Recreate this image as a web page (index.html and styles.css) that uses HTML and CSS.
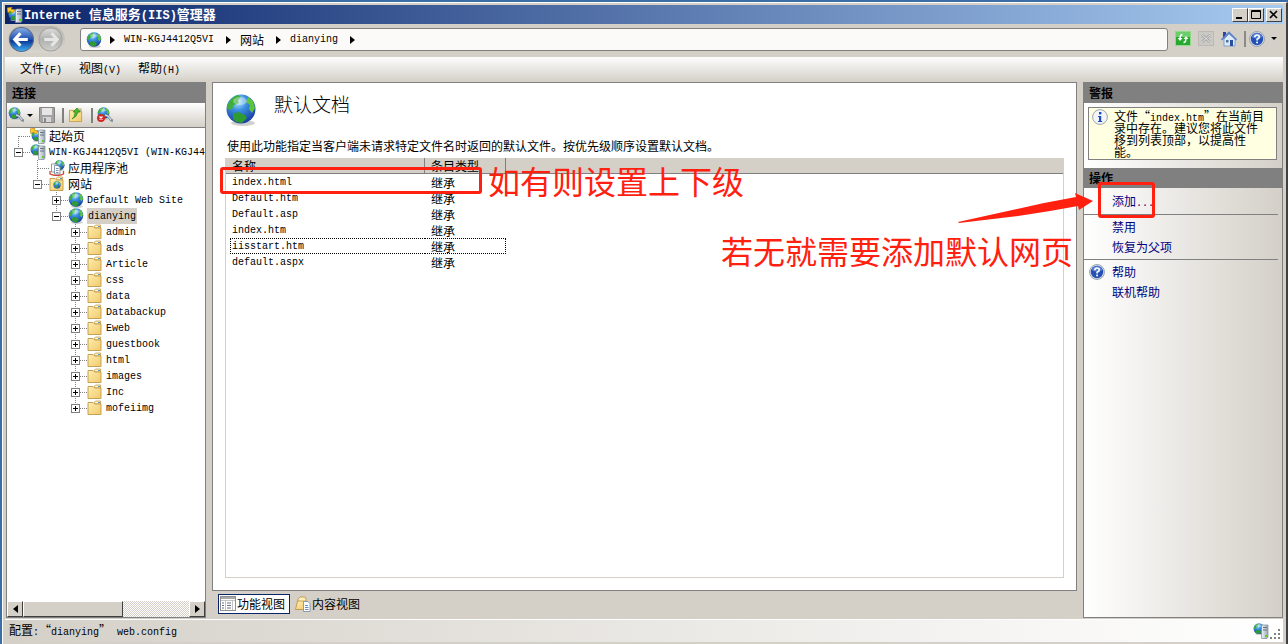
FILE: index.html
```html
<!DOCTYPE html>
<html lang="zh-CN">
    <head>
        <meta charset="utf-8">
        <meta name="viewport" content="width=device-width, initial-scale=1.0">
        <title>Internet 信息服务(IIS)管理器</title>
        <link rel="stylesheet" href="styles.css">
    </head>
    <body>
        <!-- shared icons -->
        <svg class="defs" width="0" height="0" aria-hidden="true">
            <defs>
                <radialGradient id="sea" cx="40%" cy="25%" r="75%">
                    <stop offset="0" stop-color="#b4ecff" />
                    <stop offset="0.4" stop-color="#3b8fe0" />
                    <stop offset="1" stop-color="#1a3ea4" />
                </radialGradient>
                <linearGradient id="paper" x1="0" y1="0" x2="1" y2="1">
                    <stop offset="0" stop-color="#ffeeb0" />
                    <stop offset="1" stop-color="#f0ca6c" />
                </linearGradient>
                <linearGradient id="metal" x1="0" y1="0" x2="1" y2="0">
                    <stop offset="0" stop-color="#f2f5f8" />
                    <stop offset="1" stop-color="#98a6b2" />
                </linearGradient>
                <linearGradient id="blue" x1="0" y1="0" x2="0" y2="1">
                    <stop offset="0" stop-color="#86aee6" />
                    <stop offset="0.5" stop-color="#1d4fb0" />
                    <stop offset="0.55" stop-color="#0b3796" />
                    <stop offset="1" stop-color="#3fb4f4" />
                </linearGradient>
                <linearGradient id="gray" x1="0" y1="0" x2="0" y2="1">
                    <stop offset="0" stop-color="#dcdcda" />
                    <stop offset="0.5" stop-color="#b0b0ae" />
                    <stop offset="1" stop-color="#cfcfcc" />
                </linearGradient>
                <symbol id="globe" viewBox="0 0 32 32">
                    <ellipse cx="18" cy="29" rx="12" ry="3" fill="#bbb" opacity="0.7" />
                    <circle cx="16" cy="15" r="14.5" fill="url(#sea)" />
                    <path d="M3 10 Q6 3 13 1 L16 3 L13 6 L14 9 L9 11 L7 15 L4 16 L2 14 z" fill="#3fae3c" />
                    <path d="M23 3 L28 7 L30 14 L27 19 L24 15 L25 11 L21 8 z" fill="#5cc63a" />
                    <path d="M8 20 L13 18 L20 21 L22 24 L17 29 L11 28 L8 25 z" fill="#2f9c32" />
                    <ellipse cx="15" cy="7" rx="7" ry="4" fill="#fff" opacity="0.35" />
                </symbol>
                <symbol id="tower" viewBox="0 0 16 16">
                    <path d="M8.500 3 L9.500 2 H15 V14 L14 15.500 H8.500 z" fill="url(#metal)" stroke="#7d8993" stroke-width="0.7" />
                    <path d="M10 4.500 H14 M10 7 H14" stroke="#5b6873" stroke-width="0.9" />
                    <rect x="12" y="12" width="2" height="2" fill="#57d01e" />
                </symbol>
                <symbol id="server" viewBox="0 0 16 16">
                    <use href="#globe" x="0" y="0" width="12" height="12" />
                    <use href="#tower" width="16" height="16" />
                </symbol>
                <symbol id="start" viewBox="0 0 16 16">
                    <use href="#globe" x="1" y="2" width="12" height="12" />
                    <path d="M0 1 L5 0 L4 2 L8 3 L6 6 L3 4 L1 6 z" fill="#ffc928" stroke="#b9780c" stroke-width="0.6" />
                    <use href="#tower" width="16" height="16" />
                </symbol>
                <symbol id="folder" viewBox="0 0 16 16">
                    <path d="M7 3 L8.500 1 H13.500 V4 H7 z" fill="#fff3c8" stroke="#c29a48" stroke-width="0.8" />
                    <path d="M11 2.500 h2" stroke="#4a9be0" />
                    <path d="M1 2.500 H6 L7.500 4 H14 V14.500 H1 z" fill="url(#paper)" stroke="#c29a48" stroke-width="0.9" />
                </symbol>
                <symbol id="sites" viewBox="0 0 16 16">
                    <use href="#folder" width="16" height="16" />
                    <use href="#globe" x="4" y="5" width="8" height="8" />
                </symbol>
                <symbol id="pool" viewBox="0 0 16 16">
                    <use href="#globe" x="5" y="0" width="11" height="11" />
                    <path d="M2.500 4 H8 V12 H2.500 z" fill="#fff" stroke="#6f7f93" stroke-width="0.8" />
                    <path d="M5.500 5.500 H9 L11 7.500 V14 H5.500 z" fill="#fff" stroke="#6f7f93" stroke-width="0.8" />
                    <path d="M7 8.500 H9.500 M7 10.500 H9.500 M7 12.500 H9.500" stroke="#7790bb" />
                    <path d="M1 11 V14 Q8 17 14.500 14 V11" fill="none" stroke="#cc4438" stroke-width="1.3" />
                </symbol>
                <symbol id="connect" viewBox="0 0 16 16">
                    <use href="#globe" width="13" height="13" />
                    <path d="M8 8 L11 9 L14 13 L16 14" fill="none" stroke="#7e8f9b" stroke-width="2.6" />
                    <path d="M8 8 L11 9 L14 13" fill="none" stroke="#e5ecef" />
                </symbol>
                <symbol id="disconnect" viewBox="0 0 16 16">
                    <use href="#connect" width="16" height="16" />
                    <circle cx="4" cy="11" r="4" fill="#d32626" />
                    <path d="M2.500 9.500 L5.500 12.500 M5.500 9.500 L2.500 12.500" stroke="#fff" stroke-width="1.3" />
                </symbol>
                <symbol id="save" viewBox="0 0 16 16">
                    <path d="M0.500 0.500 H15.500 V15.500 H2 L0.500 14 z" fill="#a3a3a3" stroke="#858585" />
                    <rect x="3" y="1" width="10" height="7" fill="#e6e6e6" />
                    <rect x="4" y="10" width="8" height="5" fill="#d6d6d6" />
                    <rect x="5" y="11" width="2" height="4" fill="#888" />
                </symbol>
                <symbol id="up" viewBox="0 0 16 16">
                    <use href="#folder" y="1" width="16" height="15" />
                    <path d="M4 12 Q7 10 7 5 L5 5 L9 1 L12 5 L10 5 Q9 10 4 12 z" fill="#46b829" stroke="#238017" stroke-width="0.6" />
                </symbol>
                <symbol id="refresh" viewBox="0 0 16 16">
                    <rect x="0.500" y="0.500" width="15" height="14" fill="#27a82e" stroke="#8ddb8b" />
                    <rect x="1" y="1" width="14" height="5" fill="#6ccd6b" />
                    <path d="M7.500 3.500 Q5 3.500 5 8 M8.500 11.500 Q11 11.500 11 7" fill="none" stroke="#fff" stroke-width="1.500" />
                    <path d="M2.500 7 H7.500 L5 10 z M8.500 8 H13.500 L11 5 z" fill="#fff" />
                </symbol>
                <symbol id="stop" viewBox="0 0 16 16">
                    <rect x="0.500" y="0.500" width="15" height="14" fill="#cbc9c4" stroke="#bbb9b4" />
                    <path d="M4 4 L12 11 M12 4 L4 11" stroke="#a6a6a6" stroke-width="2.600" />
                    <path d="M4 4 L12 11 M12 4 L4 11" stroke="#e4e4e4" />
                </symbol>
                <symbol id="home" viewBox="0 0 16 16">
                    <path d="M2 1 H5 V5 L2 8 z" fill="#2747a5" />
                    <path d="M3 8 L8 3 L14 8 V15 H3 z" fill="#dcebfb" stroke="#6d8fc4" stroke-width="0.8" />
                    <path d="M0.500 9 L8 1.500 L15.500 9" fill="none" stroke="#5c82c8" stroke-width="1.6" />
                    <rect x="9" y="9" width="3" height="6" fill="#274f9e" />
                    <rect x="5" y="9" width="2.500" height="2.500" fill="#51709f" />
                </symbol>
                <symbol id="help" viewBox="0 0 16 16">
                    <circle cx="8" cy="8" r="7.500" fill="#d8dde6" stroke="#8c95a6" stroke-width="0.8" />
                    <circle cx="8" cy="8" r="6.200" fill="#2450b4" />
                    <path d="M2.500 6 Q4 2.500 8 2.200 Q12 2.500 13.500 6 Q8 9 2.500 6" fill="#7ba0e4" opacity="0.6" />
                    <path d="M5.800 6.300 Q5.800 4 8 4 Q10.300 4 10.300 6 Q10.300 7.300 8.100 8.300 V9.500" fill="none" stroke="#fff" stroke-width="1.6" />
                    <rect x="7.200" y="10.600" width="1.800" height="1.700" fill="#fff" />
                </symbol>
                <symbol id="info" viewBox="0 0 16 16">
                    <circle cx="8" cy="8" r="7.400" fill="#f3f5f9" stroke="#9ea4ae" />
                    <rect x="7" y="3" width="2.400" height="2.400" fill="#1d4dc0" />
                    <path d="M6 7 H9.200 V12 H10.200 V13 H6 V12 H7 V8 H6 z" fill="#1d4dc0" />
                </symbol>
                <symbol id="features" viewBox="0 0 16 16">
                    <rect x="0.500" y="0.500" width="15" height="14" fill="#fff" stroke="#8e8e8e" />
                    <path d="M1 2 H15" stroke="#a9a9a9" stroke-width="2" />
                    <path d="M1 4.500 H15 M5.500 5 V14 M12.500 5 V14" stroke="#c3c3c3" />
                    <path d="M2 7 h2 M2 9.500 h2 M2 12 h2 M7 7 h4 M7 9.500 h4 M7 12 h4" stroke="#66717f" />
                </symbol>
                <symbol id="content" viewBox="0 0 16 16">
                    <path d="M3 3 L5 1 H10 L11 3 V12 H3 z" fill="#fff0bd" stroke="#b98d3c" stroke-width="0.8" />
                    <path d="M0.500 13.500 L2.500 5 H11 L9.500 13.500 z" fill="url(#paper)" stroke="#b98d3c" stroke-width="0.8" />
                    <path d="M8.500 5.500 H13 L15 7.500 V15.500 H8.500 z" fill="#fff" stroke="#7488aa" stroke-width="0.8" />
                    <path d="M10 9.500 h3 M10 11.500 h3.500 M10 13.500 h3.500" stroke="#6a8cc4" />
                </symbol>
            </defs>
        </svg>

        <div class="window">
            <header class="titlebar">
                <svg class="icon"><use href="#start" /></svg>
                <h1><span class="en">Internet </span>信息服务<span class="en">(IIS)</span>管理器</h1>
                <div class="controls">
                    <button aria-label="最小化"><svg viewBox="0 0 10 10"><path d="M1 8 H7" stroke="#000" stroke-width="2" /></svg></button>
                    <button aria-label="最大化"><svg viewBox="0 0 10 10"><path d="M0.500 0.500 H9.500 V8.500 H0.500 z M0 1.500 H10" fill="none" stroke="#000" /></svg></button>
                    <button class="close" aria-label="关闭"><svg viewBox="0 0 10 10"><path d="M1 1 L8 8 M8 1 L1 8" stroke="#000" stroke-width="1.600" /></svg></button>
                </div>
            </header>

            <nav class="navbar">
                <div class="history">
                    <button aria-label="后退"><svg viewBox="0 0 24 24"><circle cx="12" cy="12" r="11.500" fill="url(#blue)" stroke="#5d6b86" /><path d="M11 6 L5.500 12 L11 18 M6 12 H18" fill="none" stroke="#fff" stroke-width="3" /></svg></button>
                    <button aria-label="前进"><svg viewBox="0 0 24 24"><circle cx="12" cy="12" r="11" fill="url(#gray)" stroke="#a2a29f" /><path d="M13 6 L18.500 12 L13 18 M18 12 H6" fill="none" stroke="#e6e6e4" stroke-width="3" /></svg></button>
                </div>
                <div class="address">
                    <svg class="icon"><use href="#globe" /></svg>
                    <i class="arrow"></i>
                    <a href="#" class="en">WIN-KGJ4412Q5VI</a>
                    <i class="arrow"></i>
                    <a href="#">网站</a>
                    <i class="arrow"></i>
                    <a href="#" class="en">dianying</a>
                    <i class="arrow"></i>
                </div>
                <div class="tools">
                    <button aria-label="刷新"><svg class="icon"><use href="#refresh" /></svg></button>
                    <button aria-label="停止"><svg class="icon"><use href="#stop" /></svg></button>
                    <button aria-label="主页"><svg class="icon"><use href="#home" /></svg></button>
                    <button class="split" aria-label="帮助"><svg class="icon"><use href="#help" /></svg><i class="caret"></i></button>
                </div>
            </nav>

            <div class="menubar">
                <button>文件<span class="en">(F)</span></button>
                <button>视图<span class="en">(V)</span></button>
                <button>帮助<span class="en">(H)</span></button>
            </div>

            <div class="panes">
                <aside class="connections">
                    <h2>连接</h2>
                    <div class="toolbar">
                        <button aria-label="连接"><svg class="icon"><use href="#connect" /></svg><i class="caret"></i></button>
                        <button aria-label="保存"><svg class="icon"><use href="#save" /></svg></button>
                        <i class="sep"></i>
                        <button aria-label="向上"><svg class="icon"><use href="#up" /></svg></button>
                        <i class="sep"></i>
                        <button aria-label="断开连接"><svg class="icon"><use href="#disconnect" /></svg></button>
                    </div>
                    <ul class="tree">
                        <li><div class="node"><span class="toggle"></span><svg class="icon"><use href="#start" /></svg><a href="#">起始页</a></div></li>
                        <li>
                            <div class="node"><button class="toggle open" aria-label="折叠"></button><svg class="icon"><use href="#server" /></svg><a href="#" class="en">WIN-KGJ4412Q5VI (WIN-KGJ4412Q5VI\Administrator)</a></div>
                            <ul>
                                <li><div class="node"><span class="toggle"></span><svg class="icon"><use href="#pool" /></svg><a href="#">应用程序池</a></div></li>
                                <li>
                                    <div class="node"><button class="toggle open" aria-label="折叠"></button><svg class="icon"><use href="#sites" /></svg><a href="#">网站</a></div>
                                    <ul>
                                        <li><div class="node"><button class="toggle" aria-label="展开"></button><svg class="icon"><use href="#globe" /></svg><a href="#" class="en">Default Web Site</a></div></li>
                                        <li>
                                            <div class="node"><button class="toggle open" aria-label="折叠"></button><svg class="icon"><use href="#globe" /></svg><a href="#" class="en selected">dianying</a></div>
                                            <ul>
                                                <li><div class="node"><button class="toggle" aria-label="展开"></button><svg class="icon"><use href="#folder" /></svg><a href="#" class="en">admin</a></div></li>
                                                <li><div class="node"><button class="toggle" aria-label="展开"></button><svg class="icon"><use href="#folder" /></svg><a href="#" class="en">ads</a></div></li>
                                                <li><div class="node"><button class="toggle" aria-label="展开"></button><svg class="icon"><use href="#folder" /></svg><a href="#" class="en">Article</a></div></li>
                                                <li><div class="node"><button class="toggle" aria-label="展开"></button><svg class="icon"><use href="#folder" /></svg><a href="#" class="en">css</a></div></li>
                                                <li><div class="node"><button class="toggle" aria-label="展开"></button><svg class="icon"><use href="#folder" /></svg><a href="#" class="en">data</a></div></li>
                                                <li><div class="node"><button class="toggle" aria-label="展开"></button><svg class="icon"><use href="#folder" /></svg><a href="#" class="en">Databackup</a></div></li>
                                                <li><div class="node"><button class="toggle" aria-label="展开"></button><svg class="icon"><use href="#folder" /></svg><a href="#" class="en">Eweb</a></div></li>
                                                <li><div class="node"><button class="toggle" aria-label="展开"></button><svg class="icon"><use href="#folder" /></svg><a href="#" class="en">guestbook</a></div></li>
                                                <li><div class="node"><button class="toggle" aria-label="展开"></button><svg class="icon"><use href="#folder" /></svg><a href="#" class="en">html</a></div></li>
                                                <li><div class="node"><button class="toggle" aria-label="展开"></button><svg class="icon"><use href="#folder" /></svg><a href="#" class="en">images</a></div></li>
                                                <li><div class="node"><button class="toggle" aria-label="展开"></button><svg class="icon"><use href="#folder" /></svg><a href="#" class="en">Inc</a></div></li>
                                                <li><div class="node"><button class="toggle" aria-label="展开"></button><svg class="icon"><use href="#folder" /></svg><a href="#" class="en">mofeiimg</a></div></li>
                                            </ul>
                                        </li>
                                    </ul>
                                </li>
                            </ul>
                        </li>
                    </ul>
                    <div class="scrollbar">
                        <button aria-label="向左滚动"><i class="arrow left"></i></button>
                        <div class="track"><div class="thumb"></div></div>
                        <button aria-label="向右滚动"><i class="arrow"></i></button>
                    </div>
                </aside>

                <main>
                    <section class="page">
                        <div class="page-title">
                            <svg class="big-icon"><use href="#globe" /></svg>
                            <h2>默认文档</h2>
                        </div>
                        <p>使用此功能指定当客户端未请求特定文件名时返回的默认文件。按优先级顺序设置默认文档。</p>
                        <div class="list">
                            <table>
                                <thead>
                                    <tr><th class="name">名称</th><th class="type">条目类型</th><th></th></tr>
                                </thead>
                                <tbody>
                                    <tr><td><div class="cell en">index.html</div></td><td><div class="cell">继承</div></td><td></td></tr>
                                    <tr><td><div class="cell en">Default.htm</div></td><td><div class="cell">继承</div></td><td></td></tr>
                                    <tr><td><div class="cell en">Default.asp</div></td><td><div class="cell">继承</div></td><td></td></tr>
                                    <tr><td><div class="cell en">index.htm</div></td><td><div class="cell">继承</div></td><td></td></tr>
                                    <tr class="focused"><td><div class="cell en">iisstart.htm</div></td><td><div class="cell">继承</div></td><td></td></tr>
                                    <tr><td><div class="cell en">default.aspx</div></td><td><div class="cell">继承</div></td><td></td></tr>
                                </tbody>
                            </table>
                            <div class="mark mark-row"></div>
                            <div class="note note-order">如有则设置上下级</div>
                            <div class="note note-add">若无就需要添加默认网页</div>
                            <svg class="note-arrow" viewBox="0 0 136 32">
                                <path d="M0 29 L86 10 L118 4 L117 0 L135 8 L121 17 L120 13 L92 18 L60 23 L1 30 z" fill="#ff2010" />
                            </svg>
                        </div>
                    </section>
                    <div class="views">
                        <button class="active"><svg class="icon"><use href="#features" /></svg>功能视图</button>
                        <button><svg class="icon"><use href="#content" /></svg>内容视图</button>
                    </div>
                </main>

                <aside class="actions">
                    <h2>警报</h2>
                    <div class="alert">
                        <svg class="icon"><use href="#info" /></svg>
                        <p>文件“<span class="en">index.htm</span>”在当前目录中存在。建议您将此文件移到列表顶部，以提高性能。</p>
                    </div>
                    <h2>操作</h2>
                    <ul>
                        <li><a href="#">添加<span class="en">...</span></a><div class="mark mark-add"></div></li>
                    </ul>
                    <ul>
                        <li><a href="#">禁用</a></li>
                        <li><a href="#">恢复为父项</a></li>
                    </ul>
                    <ul>
                        <li><svg class="icon"><use href="#help" /></svg><a href="#">帮助</a></li>
                        <li><a href="#">联机帮助</a></li>
                    </ul>
                </aside>
            </div>

            <footer class="status">
                <span>配置<span class="en">:</span>“<span class="en">dianying</span>”<span class="en"> web.config</span></span>
                <svg class="icon"><use href="#server" /></svg>
                <svg class="grip" viewBox="0 0 12 12"><path d="M9 2 h2 M5 6 h2 M9 6 h2 M1 10 h2 M5 10 h2 M9 10 h2" stroke="#808080" stroke-width="2" /></svg>
            </footer>
        </div>
    </body>
</html>
```
FILE: styles.css
```css
*{
    box-sizing: border-box;
}
body{
    margin: 0;
    height: 100vh;
    padding: 2px 0 0 2px;
    overflow: hidden;
    background-color: #3a6ea5;
    color: #000;
    font-family: "Noto Sans CJK SC", sans-serif;
    font-size: 12px;
    line-height: 16px;
}
h1, h2, p, ul{
    margin: 0;
    padding: 0;
    font-size: 12px;
}
ul{
    list-style: none;
}
a{
    color: inherit;
    text-decoration: none;
}
button{
    margin: 0;
    padding: 0;
    border: none;
    background: none;
    color: inherit;
    font: inherit;
}
.defs{
    position: absolute;
}
.en{
    font-family: "Liberation Mono", monospace;
    font-size: 10px;
    white-space: pre;
}
.icon{
    flex: none;
    display: block;
    width: 16px;
    height: 16px;
}
.arrow{
    border: 4px solid transparent;
    border-left: 5px solid #000;
    border-right: none;
}
.arrow.left{
    border-left: none;
    border-right: 5px solid #000;
}
.caret{
    border: 3px solid transparent;
    border-top-color: #000;
    border-bottom: none;
}
.window{
    height: 100%;
    display: flex;
    flex-direction: column;
    padding: 2px 3px 2px 2px;
    border: 1px solid #fff;
    border-right: 2px solid #404040;
    border-bottom: none;
    background-color: #d4d0c8;
}

/* title bar */
.titlebar{
    display: flex;
    align-items: center;
    gap: 1px;
    height: 19px;
    padding: 0 1px 0 2px;
    background: linear-gradient(to right, #0a246a, #a6caf0);
    color: #fff;
}
.titlebar h1{
    flex: 1;
    font-size: 13px;
    line-height: 18px;
}
.titlebar .en{
    font-size: 12px;
}
.controls{
    display: flex;
}
.controls button{
    display: flex;
    align-items: center;
    justify-content: center;
    width: 16px;
    height: 14px;
    border: 1px solid;
    border-color: #fff #404040 #404040 #fff;
    background-color: #d4d0c8;
}
.controls svg{
    width: 10px;
    height: 10px;
}
.controls .close{
    margin-left: 2px;
}

/* address row */
.navbar{
    display: flex;
    align-items: center;
    height: 33px;
    padding: 0 6px 2px 3px;
}
.history{
    display: flex;
    gap: 4px;
    padding: 1px 2px 1px 1px;
    border-radius: 14px;
    background: linear-gradient(#b8b5ae, #d8d5ce);
}
.history svg{
    display: block;
    width: 25px;
    height: 25px;
}
.address{
    flex: 1;
    display: flex;
    align-items: center;
    height: 23px;
    margin: 0 7px 0 15px;
    padding-left: 5px;
    border: 1px solid #808080;
    border-radius: 3px;
    background-color: #fbfaf9;
}
.address .arrow{
    margin: 0 9px 0 12px;
}
.address .icon + .arrow{
    margin-left: 8px;
}
.tools{
    display: flex;
    gap: 7px;
    padding-bottom: 2px;
}
.tools .split{
    display: flex;
    align-items: center;
    gap: 6px;
    padding-left: 3px;
    border-left: 2px solid #8c8a86;
}

/* menu */
.menubar{
    display: flex;
    gap: 17px;
    height: 25px;
    padding: 0 15px;
    background: linear-gradient(#fdfdfc, #d4d0c8);
}

.panes{
    flex: 1;
    min-height: 0;
    display: grid;
    grid-template-columns: 200px 1fr 200px;
    gap: 6px;
    padding: 0 0 1px 1px;
}
aside{
    min-width: 0;
    border: 1px solid #808080;
}
aside h2{
    height: 20px;
    padding-left: 5px;
    background-color: #808080;
    line-height: 20px;
}

/* tree pane */
.connections{
    display: flex;
    flex-direction: column;
    background-color: #fff;
}
.toolbar{
    flex: none;
    display: flex;
    align-items: center;
    gap: 4px;
    height: 25px;
    padding: 0 1px;
    border-bottom: 1px solid #808080;
    background: linear-gradient(#fff, #d4d0c8);
}
.toolbar button{
    display: flex;
    align-items: center;
    gap: 3px;
}
.toolbar button:first-child{
    margin-right: 2px;
}
.sep{
    width: 2px;
    height: 15px;
    margin-left: 3px;
    background-color: #808080;
}
.tree{
    flex: 1;
    overflow: hidden;
}
.tree ul{
    padding-left: 19px;
}
/* dotted guide line, cut at the last item of each level */
.tree li{
    background: repeating-linear-gradient(#808080 0 1px, transparent 1px 2px) 11px 0 / 1px 100% no-repeat;
}
.tree li:last-child{
    background-size: 1px 8px;
}
.tree > li:first-child{
    background-position: 11px 8px;
}
.node{
    display: flex;
    align-items: center;
    height: 16px;
    padding-left: 7px;
    background: repeating-linear-gradient(to right, #808080 0 1px, transparent 1px 2px) 12px 8px / 11px 1px no-repeat;
    white-space: nowrap;
}
.node .icon{
    margin: 0 3px 0 7px;
}
.node .en{
    padding-top: 2px;
    line-height: 14px;
}
.toggle{
    flex: none;
    width: 9px;
    height: 9px;
}
button.toggle{
    border: 1px solid #808080;
    background:
        linear-gradient(#000, #000) center / 5px 1px no-repeat,
        linear-gradient(#000, #000) center / 1px 5px no-repeat,
        #fff;
}
button.toggle.open{
    background: linear-gradient(#000, #000) center / 5px 1px no-repeat, #fff;
}
.selected{
    padding: 0 1px;
    background-color: #d4d0c8;
}
.scrollbar{
    flex: none;
    display: flex;
    height: 16px;
}
.scrollbar button, .thumb{
    border: 1px solid;
    border-color: #fff #404040 #404040 #fff;
    background-color: #d4d0c8;
}
.scrollbar button{
    display: flex;
    align-items: center;
    justify-content: center;
    width: 16px;
}
.track{
    flex: 1;
    background: repeating-conic-gradient(#d4d0c8 0 25%, #fff 0 50%) 0 0 / 2px 2px;
}
.thumb{
    width: 60%;
    height: 100%;
}

/* middle */
main{
    display: flex;
    flex-direction: column;
    min-width: 0;
}
.page{
    flex: 1;
    display: flex;
    flex-direction: column;
    padding: 10px 12px 12px;
    border: 1px solid #808080;
    background-color: #fff;
}
.page-title{
    display: flex;
    gap: 17px;
    height: 45px;
}
.big-icon{
    width: 32px;
    height: 34px;
}
.page-title h2{
    font-size: 19px;
    font-weight: 300;
    line-height: 22px;
}
.page p{
    height: 20px;
    padding-left: 2px;
    white-space: nowrap;
}
.list{
    position: relative;
    flex: 1;
    border: 1px solid #d4d0c8;
    border-top: none;
}
table{
    width: 100%;
    table-layout: fixed;
    border-collapse: separate;
    border-spacing: 0;
}
th, td{
    height: 16px;
    padding: 0;
}
th{
    padding-left: 6px;
    border-right: 1px solid #808080;
    border-bottom: 1px solid #808080;
    background-color: #d4d0c8;
    font-weight: normal;
    line-height: 15px;
    text-align: left;
}
th:last-child{
    border-right: none;
}
.name{
    width: 199px;
}
.type{
    width: 81px;
}
.cell{
    height: 16px;
    border: 1px solid transparent;
    border-width: 1px 0;
    line-height: 15px;
}
.cell.en{
    line-height: 16px;
}
td:first-child .cell{
    margin-left: 4px;
    padding-left: 1px;
    border-left-width: 1px;
}
td:nth-child(2) .cell{
    padding-left: 6px;
    border-right-width: 1px;
}
.focused .cell{
    border-color: #000;
    border-style: dotted;
}
.views{
    display: flex;
    gap: 3px;
    height: 27px;
    padding: 3px 6px 4px;
}
.views button{
    display: flex;
    align-items: center;
    gap: 1px;
    padding: 0 4px 0 1px;
    border: 1px solid transparent;
}
.views .active{
    border-color: #0a246a;
    background-color: #fff;
}

/* right pane */
.actions{
    background: linear-gradient(to right, #fff, #d4d0c8);
}
.alert{
    display: flex;
    gap: 6px;
    margin: 4px 5px 8px 4px;
    padding: 1px 8px 1px 3px;
    border: 1px solid #808080;
    background-color: #ffffe1;
}
.alert p{
    padding-top: 1px;
    line-height: 12px;
}
.alert .en{
    line-height: 0;
}
.actions ul{
    margin-right: 4px;
    padding: 2px 0;
}
.actions h2 + ul{
    padding-top: 4px;
}
.actions ul + ul{
    border-top: 1px solid #808080;
}
.actions li{
    position: relative;
    display: flex;
    align-items: center;
    height: 20px;
    padding-left: 28px;
    color: #000080;
}
.actions li .icon{
    margin: 0 7px 0 -23px;
}

/* red notes over the panes */
.mark{
    position: absolute;
    border: 3px solid #ff2010;
    border-radius: 3px;
}
.mark-row{
    top: 9px;
    left: -6px;
    width: 262px;
    height: 27px;
}
.mark-add{
    top: -10px;
    left: 14px;
    width: 57px;
    height: 36px;
}
.note{
    position: absolute;
    color: #ff2010;
    font-size: 32px;
    line-height: 40px;
    white-space: nowrap;
}
.note-order{
    top: 2px;
    left: 262px;
}
.note-add{
    top: 72px;
    right: -10px;
}
.note-arrow{
    position: absolute;
    z-index: 1;
    top: 35px;
    right: -31px;
    width: 136px;
    height: 32px;
}

/* status bar */
.status{
    display: flex;
    align-items: center;
    height: 23px;
    padding: 0 2px 0 4px;
    border-top: 1px solid #fff;
    background: linear-gradient(to right, #d4d0c8, #fff);
}
.status > span{
    flex: 1;
}
.grip{
    width: 12px;
    height: 12px;
    margin-top: 6px;
}
```
